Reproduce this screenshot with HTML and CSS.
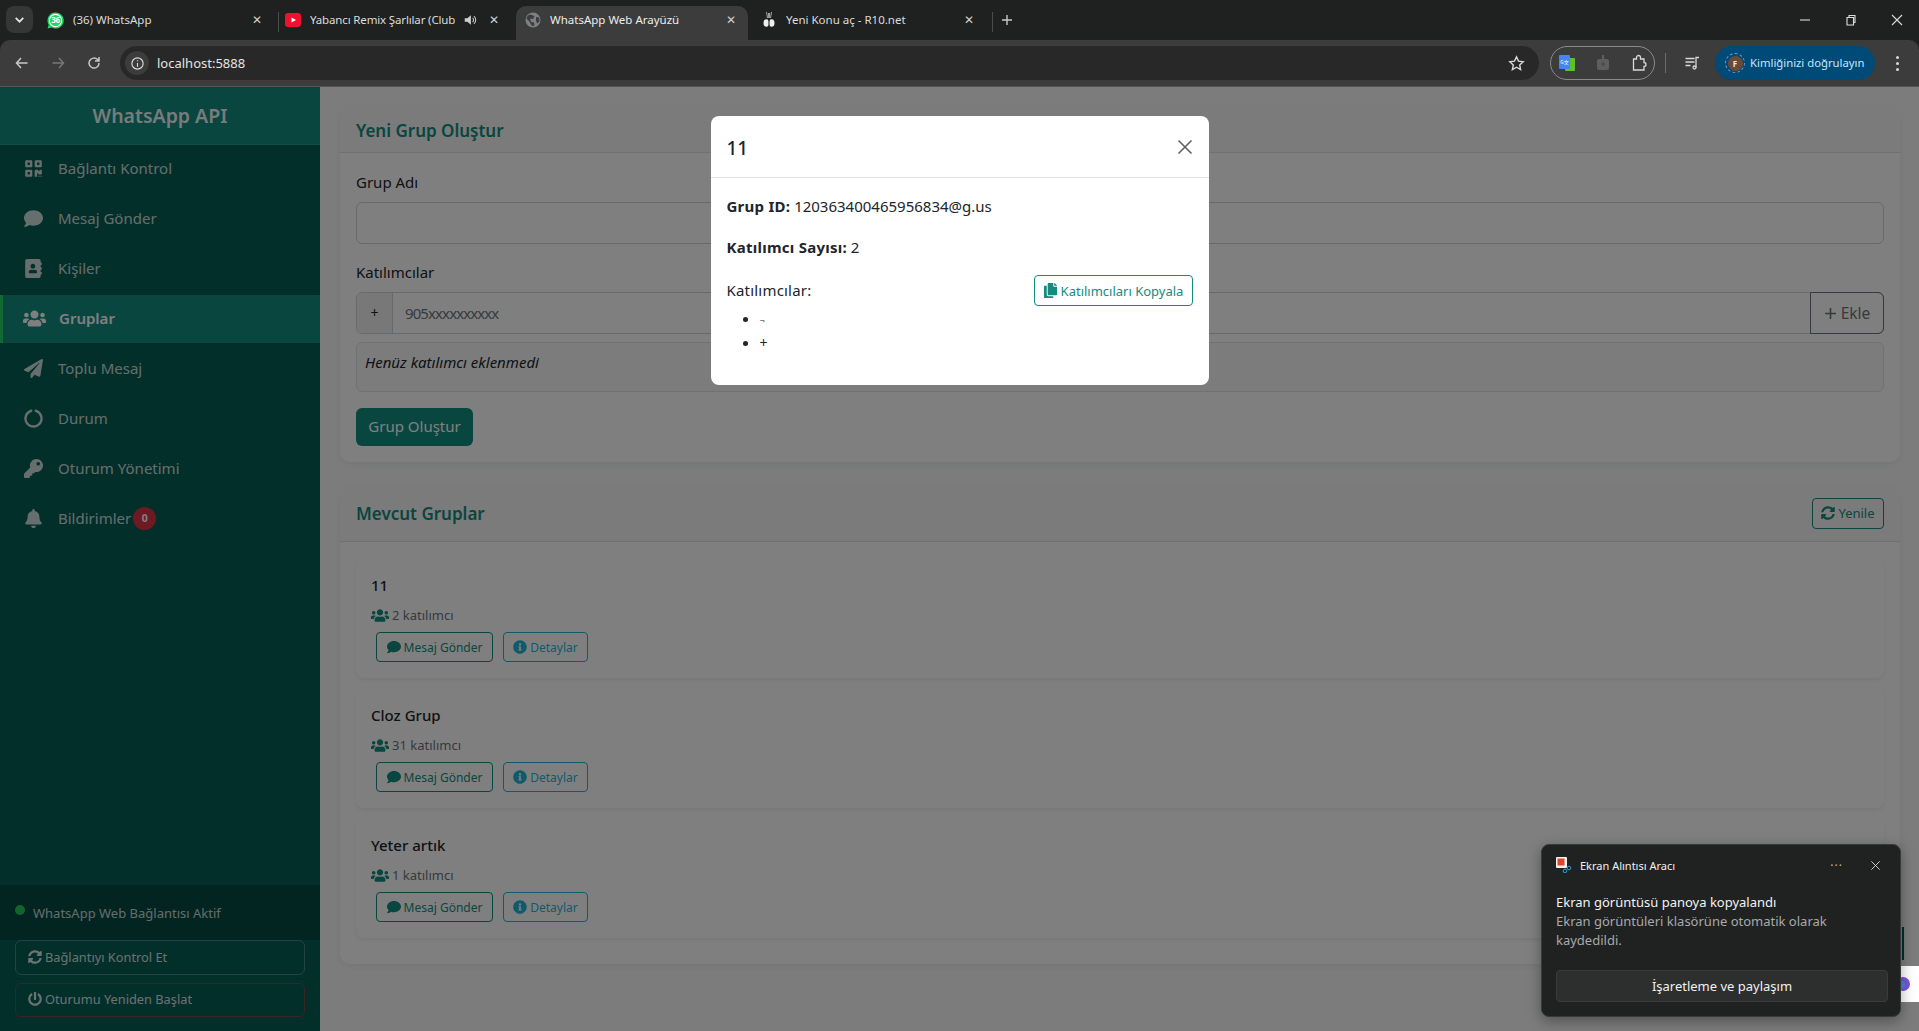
FILE: index.html
```html
<!DOCTYPE html>
<html lang="tr">
<head>
<meta charset="utf-8">
<title>WhatsApp Web Arayüzü</title>
<link rel="stylesheet" href="styles.css">
</head>
<body>
<svg class="defs" xmlns="http://www.w3.org/2000/svg">
  <symbol id="i-comment" viewBox="0 0 512 512"><path d="M256 32C114.6 32 0 125.1 0 240c0 49.6 21.4 95 57 130.7C44.5 421.1 2.7 466 2.2 466.5c-2.2 2.3-2.8 5.7-1.5 8.7S4.8 480 8 480c66.3 0 116-31.8 140.6-51.4 32.7 12.3 69 19.4 107.4 19.4 141.4 0 256-93.1 256-208S397.4 32 256 32z"/></symbol>
  <symbol id="i-users" viewBox="0 0 640 512"><path d="M96 224c35.3 0 64-28.7 64-64s-28.7-64-64-64-64 28.7-64 64 28.7 64 64 64zm448 0c35.3 0 64-28.7 64-64s-28.7-64-64-64-64 28.7-64 64 28.7 64 64 64zm32 32h-64c-17.6 0-33.5 7.1-45.1 18.6 40.3 22.1 68.9 62 75.1 109.4h66c17.7 0 32-14.3 32-32v-32c0-35.3-28.7-64-64-64zm-256 0c61.9 0 112-50.1 112-112S381.9 32 320 32 208 82.1 208 144s50.1 112 112 112zm76.8 32h-8.3c-20.8 10-43.9 16-68.5 16s-47.6-6-68.5-16h-8.3C179.6 288 128 339.6 128 403.2V432c0 26.5 21.5 48 48 48h288c26.5 0 48-21.5 48-48v-28.8c0-63.6-51.6-115.2-115.2-115.2zm-223.7-13.4C161.5 263.1 145.6 256 128 256H64c-35.3 0-64 28.7-64 64v32c0 17.7 14.3 32 32 32h65.9c6.3-47.4 34.9-87.3 75.2-109.4z"/></symbol>
  <symbol id="i-plane" viewBox="0 0 512 512"><path d="M476 3.2L12.5 270.6c-18.1 10.4-15.8 35.6 2.2 43.2L121 358.4l287.3-253.2c5.5-4.9 13.3 2.6 8.6 8.3L176 407v80.5c0 23.6 28.5 32.9 42.5 15.8L282 426l124.6 52.2c14.2 6 30.4-2.9 33-18.2l72-432C515 7.8 493.3-6.8 476 3.2z"/></symbol>
  <symbol id="i-bell" viewBox="0 0 448 512"><path d="M224 512c35.32 0 63.97-28.65 63.97-64H160.03c0 35.35 28.65 64 63.97 64zm215.39-149.71c-19.32-20.76-55.47-51.99-55.47-154.29 0-77.7-54.48-139.9-127.94-155.16V32c0-17.67-14.32-32-31.98-32s-31.98 14.33-31.98 32v20.84C118.56 68.1 64.08 130.3 64.08 208c0 102.3-36.15 133.53-55.47 154.29-6 6.45-8.66 14.16-8.61 21.71.11 16.4 12.98 32 32.1 32h383.8c19.12 0 32-15.6 32.1-32 .05-7.55-2.61-15.27-8.61-21.71z"/></symbol>
  <symbol id="i-key" viewBox="0 0 512 512"><path d="M512 176.001C512 273.203 433.202 352 336 352c-11.22 0-22.19-1.062-32.827-3.069l-24.012 27.014A23.999 23.999 0 0 1 261.223 384H224v40c0 13.255-10.745 24-24 24h-40v40c0 13.255-10.745 24-24 24H24c-13.255 0-24-10.745-24-24v-78.059c0-6.365 2.529-12.47 7.029-16.971l161.802-161.802C163.108 213.814 160 195.271 160 176 160 78.798 238.797.001 335.999 0 433.488-.001 512 78.511 512 176.001zM336 128c0 26.51 21.49 48 48 48s48-21.49 48-48-21.49-48-48-48-48 21.49-48 48z"/></symbol>
  <symbol id="i-sync" viewBox="0 0 512 512"><path d="M370.72 133.28C339.458 104.008 298.888 87.962 255.848 88c-77.458.068-144.328 53.178-162.791 126.85-1.344 5.363-6.122 9.15-11.651 9.15H24.103c-7.498 0-13.194-6.807-11.807-14.176C33.933 94.924 134.813 8 256 8c66.448 0 126.791 26.136 171.315 68.685L463.03 40.97C478.149 25.851 504 36.559 504 57.941V192c0 13.255-10.745 24-24 24H345.941c-21.382 0-32.09-25.851-16.971-40.971l41.75-41.749zM32 296h134.059c21.382 0 32.09 25.851 16.971 40.971l-41.75 41.75c31.262 29.273 71.835 45.319 114.876 45.28 77.418-.07 144.315-53.144 162.787-126.849 1.344-5.363 6.122-9.15 11.651-9.15h57.304c7.498 0 13.194 6.807 11.807 14.176C478.067 417.076 377.187 504 256 504c-66.448 0-126.791-26.136-171.315-68.685L48.97 471.03C33.851 486.149 8 475.441 8 454.059V320c0-13.255 10.745-24 24-24z"/></symbol>
  <symbol id="i-power" viewBox="0 0 512 512"><path d="M400 54.1c63 45 104 118.6 104 201.9 0 136.8-110.8 247.7-247.5 248C120 504.3 8.2 393 8 256.4 7.9 173.1 48.9 99.3 111.8 54.2c11.7-8.3 28-4.8 35 7.7L162.6 90c5.9 10.5 3.1 23.8-6.6 31-41.5 30.8-68 79.6-68 134.9-.1 92.3 74.5 168.1 168 168.1 91.6 0 168.6-74.2 168-169.1-.3-51.8-24.7-101.8-68.1-134-9.7-7.2-12.4-20.5-6.5-30.9l15.8-28.1c7-12.4 23.2-16.1 34.8-7.8zM296 264V24c0-13.3-10.7-24-24-24h-32c-13.3 0-24 10.7-24 24v240c0 13.3 10.7 24 24 24h32c13.3 0 24-10.7 24-24z"/></symbol>
  <symbol id="i-info" viewBox="0 0 512 512"><path d="M256 8C119.043 8 8 119.083 8 256c0 136.997 111.043 248 248 248s248-111.003 248-248C504 119.083 392.957 8 256 8zm0 110c23.196 0 42 18.804 42 42s-18.804 42-42 42-42-18.804-42-42 18.804-42 42-42zm56 254c0 6.627-5.373 12-12 12h-88c-6.627 0-12-5.373-12-12v-24c0-6.627 5.373-12 12-12h12v-64h-12c-6.627 0-12-5.373-12-12v-24c0-6.627 5.373-12 12-12h64c6.627 0 12 5.373 12 12v100h12c6.627 0 12 5.373 12 12v24z"/></symbol>
  <symbol id="i-copy" viewBox="0 0 448 512"><path d="M320 448v40c0 13.255-10.745 24-24 24H24c-13.255 0-24-10.745-24-24V120c0-13.255 10.745-24 24-24h72v296c0 30.879 25.121 56 56 56h168zm0-344V0H152c-13.255 0-24 10.745-24 24v368c0 13.255 10.745 24 24 24h272c13.255 0 24-10.745 24-24V128H344c-13.2 0-24-10.8-24-24zm120.971-31.029L375.029 7.029A24 24 0 0 0 358.059 0H352v96h96v-6.059a24 24 0 0 0-7.029-16.97z"/></symbol>
  <symbol id="i-book" viewBox="0 0 448 512"><path d="M436 160c6.6 0 12-5.4 12-12v-40c0-6.6-5.4-12-12-12h-20V48c0-26.5-21.5-48-48-48H48C21.5 0 0 21.5 0 48v416c0 26.5 21.5 48 48 48h320c26.5 0 48-21.5 48-48v-48h20c6.6 0 12-5.4 12-12v-40c0-6.6-5.4-12-12-12h-20v-64h20c6.6 0 12-5.4 12-12v-40c0-6.6-5.4-12-12-12h-20v-64h20zm-228-32c35.3 0 64 28.7 64 64s-28.7 64-64 64-64-28.7-64-64 28.7-64 64-64zm112 236.8c0 10.6-10 19.2-22.4 19.2H118.4C106 384 96 375.4 96 364.8v-19.2c0-31.8 30.1-57.6 67.2-57.6h5c12.3 5.1 25.7 8 39.8 8s27.6-2.9 39.8-8h5c37.1 0 67.2 25.8 67.2 57.6v19.2z"/></symbol>
  <symbol id="i-qr" viewBox="0 0 448 512"><path fill-rule="evenodd" d="M0 64c0-18 14-32 32-32h128c18 0 32 14 32 32v128c0 18-14 32-32 32H32c-18 0-32-14-32-32zm64 32v64h64V96zM256 64c0-18 14-32 32-32h128c18 0 32 14 32 32v128c0 18-14 32-32 32H288c-18 0-32-14-32-32zm64 32v64h64V96zM0 320c0-18 14-32 32-32h128c18 0 32 14 32 32v128c0 18-14 32-32 32H32c-18 0-32-14-32-32zm64 32v64h64v-64zM256 304c0-9 7-16 16-16h64c9 0 16 7 16 16v16h32v-16c0-9 7-16 16-16h32c9 0 16 7 16 16v96c0 9-7 16-16 16h-64c-9 0-16-7-16-16v-16h-32v80c0 9-7 16-16 16h-32c-9 0-16-7-16-16zM352 448h32v32h-32zm64 0h32v32h-32z"/></symbol>
  <symbol id="i-notch" viewBox="0 0 512 512"><path d="M288 39.1v16.7c0 10.8 7.3 20.2 17.7 23.1C383.2 100.4 440 171.5 440 256c0 101.7-82.3 184-184 184-101.700 0-184-82.300-184-184 0-84.500 56.800-155.600 134.300-177.200C216.700 75.900 224 66.500 224 55.700V39.100c0-15.700-14.800-27.200-30-23.200C86.600 43.500 7.400 141.200 8 257.300c.700 137.100 111.500 247 248.600 246.700C393.300 503.700 504 392.800 504 256c0-115.600-79-212.800-186-240.200-15.200-3.900-30 7.500-30 23.300z"/></symbol>
</svg>

<header class="browser">
  <div class="tabstrip">
    <button class="tab-search"><svg class="chevron" viewBox="0 0 12 12"><path d="M2.500 4.500 6 8l3.500-3.500"/></svg></button>
    <div class="tab">
      <svg class="favicon" viewBox="0 0 20 20"><path class="wa-green" d="M10 .500a9.500 9.500 0 0 0-8 14.400L.700 19.500l4.800-1.200A9.500 9.500 0 1 0 10 .500z"/><circle class="wa-inner" cx="10" cy="10" r="7.200"/><text class="wa-text" x="10" y="13.200">36</text></svg>
      <span class="tab-title">(36) WhatsApp</span>
      <span class="tab-close">✕</span>
    </div>
    <span class="tab-sep"></span>
    <div class="tab tab-yt">
      <svg class="favicon" viewBox="0 0 16 16"><rect class="yt-red" y="1" width="16" height="14" rx="3"/><path class="yt-play" d="M6.500 5.500 11 8l-4.500 2.500z"/></svg>
      <span class="tab-title tab-title-cut">Yabancı Remix Şarlılar (Club</span>
      <svg class="tab-audio" viewBox="0 0 16 16"><path class="fill-light" d="M2 6h3l4-3.500v11L5 10H2z"/><path class="stroke-light" d="M11 5.500a3.500 3.500 0 0 1 0 5M12.500 3.500a6 6 0 0 1 0 9"/></svg>
      <span class="tab-close">✕</span>
    </div>
    <div class="tab tab-active">
      <svg class="favicon" viewBox="0 0 16 16"><circle class="globe" cx="8" cy="8" r="7.500"/><path class="globe-land" d="M5 2.500 9.500 4 8 7 5 6.500 6 10l3 .5.500 3-2.500.5-3-5L1.500 6.500C2 4.500 3.500 3 5 2.500zM11 5l3 .5.500 4-2.500 2-1-3z"/></svg>
      <span class="tab-title">WhatsApp Web Arayüzü</span>
      <span class="tab-close">✕</span>
    </div>
    <div class="tab tab-last">
      <svg class="favicon" viewBox="0 0 16 16"><path class="ear" d="M5.500 0 6.500 6M10.500 0 9.500 6M7.500 1l.3 5M8.500 1l-.3 5"/><ellipse class="fill-white" cx="5.300" cy="11" rx="2.800" ry="3.800"/><ellipse class="fill-white" cx="10.700" cy="11" rx="2.800" ry="3.800"/><path class="ear-dark" d="M8 8v6"/></svg>
      <span class="tab-title">Yeni Konu aç - R10.net</span>
      <span class="tab-close">✕</span>
    </div>
    <span class="tab-sep"></span>
    <svg class="new-tab" viewBox="0 0 12 12"><path d="M6 1v10M1 6h10"/></svg>
    <div class="window-controls">
      <svg viewBox="0 0 12 12"><path d="M1 6h10"/></svg>
      <svg viewBox="0 0 12 12"><path d="M2 3.500h6.500V11H2zM4 3.500V1.500h6v7H8.500"/></svg>
      <svg viewBox="0 0 12 12"><path d="M1 1l10 10M11 1 1 11"/></svg>
    </div>
  </div>
  <div class="toolbar">
    <svg class="nav-icon" viewBox="0 0 16 16"><path d="M13.500 8h-11M7 3 2.500 8 7 13"/></svg>
    <svg class="nav-icon nav-dim" viewBox="0 0 16 16"><path d="M2.500 8h11M9 3l4.500 5L9 13"/></svg>
    <svg class="nav-icon" viewBox="0 0 16 16"><path d="M13 8a5 5 0 1 1-1.500-3.500L13 6M13 2v4H9"/></svg>
    <div class="omnibox">
      <span class="site-info"><svg viewBox="0 0 16 16"><circle cx="8" cy="8" r="6"/><path d="M8 7.500v4M8 4.500v1.200"/></svg></span>
      <span class="url">localhost:5888</span>
      <svg class="star" viewBox="0 0 16 16"><path d="m8 1.800 1.900 4 4.400.5-3.300 3 .9 4.400L8 11.500l-3.900 2.200.9-4.400-3.300-3 4.400-.5z"/></svg>
    </div>
    <div class="ext-pill">
      <svg class="ext" viewBox="0 0 18 18"><rect class="tr-green" x="7" y="4" width="10" height="13" rx="1"/><rect class="tr-blue" x="1" y="1" width="11" height="14" rx="1"/><text class="tr-text" x="6.500" y="9.500">G文</text></svg>
      <svg class="ext" viewBox="0 0 18 18"><rect class="ext-dim" x="3" y="5" width="12" height="11" rx="2"/><rect class="ext-dim" x="8" y="1" width="2" height="4"/><circle class="ext-dark" cx="9" cy="10" r="2"/></svg>
      <svg class="ext ext-puzzle" viewBox="0 0 18 18"><path d="M3.500 5h3V3.500a2 2 0 0 1 4 0V5h3.500v3.500a2 2 0 0 1 0 4V16H3.500z"/></svg>
    </div>
    <span class="toolbar-sep"></span>
    <svg class="queue" viewBox="0 0 16 16"><path d="M1.500 3.500h9M1.500 7h9M1.500 10.500h5M12 12.500V2.500h3"/><circle cx="10.500" cy="12.500" r="1.500"/></svg>
    <div class="profile">
      <span class="avatar-ring"><span class="avatar">F</span></span>
      <span class="profile-text">Kimliğinizi doğrulayın</span>
    </div>
    <span class="kebab"><i></i><i></i><i></i></span>
  </div>
</header>

<div class="app">
  <aside class="sidebar">
    <div class="brand">WhatsApp API</div>
    <nav class="menu">
      <a class="menu-item"><svg class="mi"><use href="#i-qr"/></svg>Bağlantı Kontrol</a>
      <a class="menu-item"><svg class="mi"><use href="#i-comment"/></svg>Mesaj Gönder</a>
      <a class="menu-item"><svg class="mi"><use href="#i-book"/></svg>Kişiler</a>
      <a class="menu-item menu-active"><svg class="mi mi-wide"><use href="#i-users"/></svg>Gruplar</a>
      <a class="menu-item"><svg class="mi"><use href="#i-plane"/></svg>Toplu Mesaj</a>
      <a class="menu-item"><svg class="mi"><use href="#i-notch"/></svg>Durum</a>
      <a class="menu-item"><svg class="mi"><use href="#i-key"/></svg>Oturum Yönetimi</a>
      <a class="menu-item"><svg class="mi"><use href="#i-bell"/></svg>Bildirimler<span class="badge">0</span></a>
    </nav>
    <div class="status"><span class="dot"></span><span>WhatsApp Web Bağlantısı Aktif</span></div>
    <div class="side-actions">
      <button class="side-btn"><svg class="bi"><use href="#i-sync"/></svg>Bağlantıyı Kontrol Et</button>
      <button class="side-btn side-btn-danger"><svg class="bi"><use href="#i-power"/></svg>Oturumu Yeniden Başlat</button>
    </div>
  </aside>

  <main class="main">
    <section class="card">
      <div class="card-head card-head-a"><h2>Yeni Grup Oluştur</h2></div>
      <div class="card-body card-body-a">
        <label class="label">Grup Adı</label>
        <div class="input input-block"></div>
        <label class="label">Katılımcılar</label>
        <div class="input-group">
          <span class="addon">+</span>
          <span class="input-ph">905xxxxxxxxxx</span>
          <button class="add-btn"><svg class="plus" viewBox="0 0 12 12"><path d="M6 1v10M1 6h10"/></svg>Ekle</button>
        </div>
        <div class="participants">Henüz katılımcı eklenmedi</div>
        <button class="primary-btn">Grup Oluştur</button>
      </div>
    </section>
    <section class="card">
      <div class="card-head card-head-b"><h2>Mevcut Gruplar</h2><button class="outline-btn btn-refresh"><svg class="bi"><use href="#i-sync"/></svg>Yenile</button></div>
      <div class="card-body card-body-b">
        <article class="group">
          <h3>11</h3>
          <p class="meta"><svg class="meta-icon"><use href="#i-users"/></svg>2 katılımcı</p>
          <div class="group-actions"><button class="outline-btn"><svg class="bi"><use href="#i-comment"/></svg>Mesaj Gönder</button><button class="outline-btn info-btn"><svg class="bi"><use href="#i-info"/></svg>Detaylar</button></div>
        </article>
        <article class="group">
          <h3>Cloz Grup</h3>
          <p class="meta"><svg class="meta-icon"><use href="#i-users"/></svg>31 katılımcı</p>
          <div class="group-actions"><button class="outline-btn"><svg class="bi"><use href="#i-comment"/></svg>Mesaj Gönder</button><button class="outline-btn info-btn"><svg class="bi"><use href="#i-info"/></svg>Detaylar</button></div>
        </article>
        <article class="group">
          <h3>Yeter artık</h3>
          <p class="meta"><svg class="meta-icon"><use href="#i-users"/></svg>1 katılımcı</p>
          <div class="group-actions"><button class="outline-btn"><svg class="bi"><use href="#i-comment"/></svg>Mesaj Gönder</button><button class="outline-btn info-btn"><svg class="bi"><use href="#i-info"/></svg>Detaylar</button></div>
        </article>
      </div>
    </section>
  </main>

  <span class="float-strip"></span>

  <div class="backdrop">
    <div class="modal">
      <div class="modal-head"><h4>11</h4><svg class="modal-close" viewBox="0 0 16 16"><path d="M1.500 1.500l13 13M14.500 1.500l-13 13"/></svg></div>
      <div class="modal-body">
        <p><strong>Grup ID:</strong> 120363400465956834@g.us</p>
        <p><strong>Katılımcı Sayısı:</strong> 2</p>
        <div class="modal-row">
          <span class="modal-sub">Katılımcılar:</span>
          <button class="copy-btn"><svg class="bi"><use href="#i-copy"/></svg>Katılımcıları Kopyala</button>
        </div>
        <ul class="modal-list">
          <li><span class="tiny">¬</span></li>
          <li><span class="list-plus">+</span></li>
        </ul>
      </div>
    </div>
  </div>

  <span class="float-chip"><svg viewBox="0 0 16 16"><circle class="chip-a" cx="8" cy="8" r="7"/><circle class="chip-b" cx="6" cy="9" r="4"/></svg></span>

  <aside class="toast">
    <div class="toast-head">
      <svg class="toast-app" viewBox="0 0 16 16"><rect class="snip-white" width="11" height="11" rx="1"/><rect class="snip-red" x="1.500" y="1.500" width="7" height="7"/><circle class="snip-blue" cx="13" cy="11" r="1.800"/><circle class="snip-blue" cx="9" cy="14" r="1.800"/></svg>
      <span class="toast-app-name">Ekran Alıntısı Aracı</span>
      <span class="toast-more">···</span>
      <svg class="toast-x" viewBox="0 0 12 12"><path d="M1.500 1.500l9 9M10.500 1.500l-9 9"/></svg>
    </div>
    <div class="toast-title">Ekran görüntüsü panoya kopyalandı</div>
    <div class="toast-text">Ekran görüntüleri klasörüne otomatik olarak kaydedildi.</div>
    <button class="toast-btn">İşaretleme ve paylaşım</button>
  </aside>
</div>
</body>
</html>
```
FILE: styles.css
```css
* { box-sizing: border-box; }
html, body { margin: 0; height: 100%; overflow: hidden; }
body { width: 1919px; height: 1031px; font-family: "Noto Sans", "Liberation Sans", sans-serif; font-size: 15px; line-height: 24px; color: #212529; background: #f8f9fa; }
.defs { position: absolute; width: 0; height: 0; }
button { font-family: inherit; cursor: pointer; }
svg { display: block; flex: none; }

/* browser chrome */
.browser { height: 87px; background: #1f2120; color: #e3e3e3; }
.tabstrip { height: 40px; display: flex; align-items: flex-start; padding-left: 6px; }
.tab-search { width: 27px; height: 27px; margin-top: 6px; margin-right: 7px; background: #353636; border: 0; border-radius: 8px; padding: 7px; }
.chevron { width: 13px; height: 13px; fill: none; stroke: #e3e3e3; stroke-width: 1.6; }
.tab { width: 238px; height: 34px; margin-top: 6px; padding: 0 14px 6px 7px; display: flex; align-items: center; font-size: 11.500px; }
.tab .favicon { width: 16px; height: 16px; margin: 0 9px 0 0; }
.tab:first-of-type .favicon { width: 17px; height: 17px; }
.tab-yt { margin-left: -1px; padding-left: 7px; padding-right: 15px; }
.tab-last { padding-right: 16px; }
.tab-sep { width: 1px; height: 20px; background: #4b4c4c; margin-top: 12px; flex: none; }
.tab-title { flex: 1; white-space: nowrap; overflow: hidden; color: #dcdcdc; }
.tab-title-cut { flex: none; letter-spacing: -.15px; }
.tab-audio { width: 14px; height: 14px; margin-left: 8px; }
.tab-close { font-size: 12px; color: #d0d0d0; width: 14px; text-align: center; flex: none; margin-left: auto; }
.tab-active { background: #3c3c3c; width: 232px; margin-right: 6px; border-radius: 10px 10px 0 0; padding-left: 9px; padding-right: 10px; }
.tab-active .tab-title { color: #ececec; }
.wa-green { fill: #25d366; }
.wa-inner { fill: #25d366; stroke: #fff; stroke-width: 1.200; }
.wa-text { fill: #fff; font-size: 9.500px; font-weight: 700; text-anchor: middle; letter-spacing: -.5px; font-family: "Noto Sans", sans-serif; }
.yt-red { fill: #f0112f; }
.yt-play { fill: #fff; }
.fill-light { fill: #cfcfcf; }
.stroke-light { fill: none; stroke: #cfcfcf; stroke-width: 1.200; }
.globe { fill: #7d8082; }
.globe-land { fill: #3c3c3c; }
.ear { fill: none; stroke: #c8c8c8; stroke-width: .8; }
.ear-dark { fill: none; stroke: #111; stroke-width: 1; }
.fill-white { fill: #eee; }
.new-tab { width: 12px; height: 12px; margin: 14px 0 0 8px; fill: none; stroke: #c7c7c7; stroke-width: 1.400; }
.window-controls { margin-left: auto; display: flex; gap: 34px; padding: 14px 16px 0 0; }
.window-controls svg { width: 12px; height: 12px; fill: none; stroke: #dcdcdc; stroke-width: 1.100; }

.toolbar { height: 47px; background: #3c3c3c; border-radius: 10px 10px 0 0; display: flex; align-items: center; padding-left: 14px; border-bottom: 1px solid #555; }
.nav-icon { width: 16px; height: 16px; margin-right: 20px; fill: none; stroke: #c7c7c7; stroke-width: 1.500; }
.nav-dim { stroke: #777; }
.omnibox { width: 1419px; height: 34px; margin-left: -2px; background: #282828; border-radius: 17px; display: flex; align-items: center; padding: 0 14px 0 5px; }
.site-info { width: 24px; height: 24px; border-radius: 50%; background: #3c3c3c; display: flex; align-items: center; justify-content: center; margin-right: 8px; }
.site-info svg { width: 15px; height: 15px; fill: none; stroke: #dcdcdc; stroke-width: 1.200; }
.url { font-size: 13px; color: #e3e3e3; flex: 1; }
.star { width: 17px; height: 17px; fill: none; stroke: #d8d8d8; stroke-width: 1.300; }
.ext-pill { width: 105px; height: 34px; margin-left: 11px; border: 1px solid #8a8a8a; border-radius: 17px; display: flex; align-items: center; justify-content: space-between; padding: 0 6px 0 7px; }
.ext { width: 18px; height: 18px; }
.tr-green { fill: #5bc22a; }
.tr-blue { fill: #4285f4; }
.tr-text { fill: #fff; font-size: 5px; text-anchor: middle; font-family: "Noto Sans CJK SC", sans-serif; }
.ext-dim { fill: #5e5e5e; }
.ext-dark { fill: #4d4d4d; }
.ext-puzzle { fill: none; stroke: #d8d8d8; stroke-width: 1.300; }
.toolbar-sep { width: 1px; height: 20px; background: #6a6a6a; margin-left: 10px; }
.queue { width: 16px; height: 16px; margin-left: 18px; fill: none; stroke: #d8d8d8; stroke-width: 1.300; }
.profile { width: 160px; height: 34px; margin-left: 15px; background: #004a77; border-radius: 17px; display: flex; align-items: center; padding-left: 10px; }
.avatar-ring { width: 20px; height: 20px; border-radius: 50%; border: 1px dashed #7aa6c4; display: flex; align-items: center; justify-content: center; flex: none; }
.avatar { width: 15px; height: 15px; border-radius: 50%; background: #6b4a3a; color: #f2e6de; font-size: 8px; font-weight: 700; line-height: 15px; text-align: center; }
.profile-text { margin-left: 5px; font-size: 11.300px; color: #c2e7ff; white-space: nowrap; }
.kebab { margin-left: 21px; display: flex; flex-direction: column; gap: 3px; }
.kebab i { width: 3px; height: 3px; border-radius: 50%; background: #d8d8d8; display: block; }

/* app */
.app { height: 944px; display: flex; position: relative; overflow: hidden; }
.sidebar { width: 320px; flex: none; background: #075e54; display: flex; flex-direction: column; color: rgba(255,255,255,.8); }
.brand { height: 58px; background: #128c7e; border-bottom: 1px solid rgba(255,255,255,.1); font-size: 19.500px; font-weight: 600; line-height: 57px; text-align: center; color: rgba(255,255,255,.95); }
.menu { flex: 1; display: flex; flex-direction: column; gap: 2px; }
.menu-item { height: 48px; display: flex; align-items: center; padding-left: 24px; padding-bottom: 2px; font-size: 15px; color: rgba(255,255,255,.8); }
.mi { width: 19px; height: 19px; margin-right: 15px; fill: rgba(255,255,255,.8); }
.mi-wide { width: 23px; margin-left: -1px; margin-right: 13px; }
.menu-active { background: #128c7e; border-left: 3px solid #25d366; padding-left: 21px; font-weight: 600; color: #fff; }
.menu-active .mi { fill: #fff; }
.badge { width: 23px; height: 23px; margin-left: 2px; border-radius: 50%; background: #dc3545; color: #fff; font-size: 10.500px; font-weight: 700; line-height: 23px; text-align: center; }
.status { height: 55px; background: rgba(0,0,0,.2); padding: 16px 15px 0; display: flex; font-size: 13px; line-height: 24px; }
.dot { width: 10px; height: 10px; border-radius: 50%; background: #28c55b; margin: 4px 8px 0 0; flex: none; }
.side-actions { height: 91px; padding: 0 15px; display: flex; flex-direction: column; gap: 8px; }
.side-btn { height: 35px; background: none; border: 1px solid rgba(255,255,255,.25); border-radius: 6px; color: rgba(255,255,255,.85); font-size: 12.800px; display: flex; align-items: center; padding: 0 12px 2px; }
.side-btn-danger { height: 34px; border-color: rgba(220,53,69,.5); }
.bi { width: 14px; height: 14px; margin-right: 3px; fill: currentColor; }

.main { flex: 1; min-width: 0; padding: 19px 19px 0 20px; display: flex; flex-direction: column; gap: 25px; }
.card { background: #fff; border-radius: 10px; box-shadow: 0 2px 8px rgba(0,0,0,.06); overflow: hidden; }
.card-head { background: #f7f7f7; border-bottom: 1px solid rgba(0,0,0,.08); display: flex; align-items: center; justify-content: space-between; padding: 0 16px; }
.card-head h2 { margin: 0; font-size: 17px; font-weight: 600; color: #128c7e; }
.card-head-a { height: 47px; padding-top: 4px; }
.card-head-b { height: 55px; }
.card-body-a { padding: 17px 16px 16px; }
.card-body-b { padding: 16px 16px 16px; }
.label { display: block; font-size: 15px; line-height: 24px; margin-bottom: 8px; }
.input { height: 42px; border: 1px solid #ced4da; border-radius: 6px; background: #fff; }
.input-block { margin-bottom: 16px; }
.input-group { height: 42px; display: flex; align-items: stretch; border: 1px solid #ced4da; border-radius: 6px; background: #fff; }
.addon { width: 36px; background: #f0f1f2; border-right: 1px solid #ced4da; border-radius: 6px 0 0 6px; text-align: center; line-height: 40px; font-size: 14px; }
.input-ph { flex: 1; padding-left: 12px; line-height: 40px; color: #6c757d; font-size: 15px; letter-spacing: -.9px; }
.add-btn { width: 74px; margin: -1px; border: 1px solid #6c757d; border-radius: 0 6px 6px 0; background: none; color: #6c757d; font-size: 15.500px; display: flex; align-items: center; justify-content: center; gap: 4px; padding: 0; }
.plus { width: 13px; height: 13px; fill: none; stroke: #6c757d; stroke-width: 1.500; }
.participants { height: 50px; margin-top: 8px; padding: 6px 8px 0; border: 1px solid #dee2e6; border-radius: 6px; background: #f8f9fa; font-style: italic; font-size: 15px; line-height: 27px; }
.primary-btn { display: block; margin-top: 16px; height: 38px; width: 117px; border: 0; border-radius: 6px; background: #128c7e; color: #fff; font-size: 15px; padding: 0 0 2px; }
.outline-btn { height: 30px; background: none; border: 1px solid #128c7e; border-radius: 4px; color: #128c7e; font-size: 13px; display: inline-flex; align-items: center; justify-content: center; padding: 0 9px; margin: 0 5px; }
.btn-refresh { width: 72px; height: 31px; margin: -2px 0 0; padding: 0; }
.info-btn { border-color: #1fb5d6; color: #1fb5d6; }
.group { background: #fff; border-radius: 8px; box-shadow: 0 2px 5px rgba(0,0,0,.07); padding: 15px 15px 15px; margin-bottom: 10px; height: 120px; }
.group h3 { margin: 0; font-size: 15px; font-weight: 500; line-height: 24px; }
.meta { margin: 6px 0 5px; display: flex; align-items: center; font-size: 13px; color: #6c757d; line-height: 24px; }
.meta-icon { width: 18px; height: 15px; margin-right: 3px; fill: #128c7e; }
.group-actions { display: flex; height: 30px; }
.group-actions .outline-btn { font-size: 12px; }
.group-actions .outline-btn:first-child { width: 117px; padding: 0; }
.group-actions .outline-btn:last-child { width: 85px; padding: 0; }

.float-strip { position: absolute; right: 15px; top: 840px; width: 2px; height: 33px; background: #075e54; }
.float-chip { position: absolute; right: 0; top: 879px; width: 19px; height: 36px; background: #fff; display: flex; align-items: center; }
.float-chip svg { width: 16px; height: 16px; margin-left: -5px; }
.chip-a { fill: #7a55d6; }
.chip-b { fill: #4a82e8; }

/* modal */
.backdrop { position: absolute; inset: 0; background: rgba(0,0,0,.5); display: flex; justify-content: center; align-items: flex-start; padding-top: 29px; }
.modal { width: 498px; height: 269px; background: #fff; border-radius: 8px; overflow: hidden; }
.modal-head { height: 62px; border-bottom: 1px solid #dee2e6; display: flex; align-items: center; justify-content: space-between; padding: 2px 16px 0; }
.modal-head h4 { margin: 0; font-size: 19px; font-weight: 500; line-height: 28px; }
.modal-close { width: 16px; height: 16px; fill: none; stroke: #5c5c5c; stroke-width: 1.500; margin-top: -2px; }
.modal-body { padding: 16px 16px 0; }
.modal-body p { margin: 0 0 16px; line-height: 24px; }
.modal-body p:first-child { margin-bottom: 17px; }
.modal-body strong { font-weight: 700; letter-spacing: .25px; }
.modal-row { display: flex; align-items: center; justify-content: space-between; height: 31px; }
.modal-sub { margin-top: -2px; letter-spacing: .2px; }
.copy-btn { width: 159px; height: 31px; background: none; border: 1px solid #128c7e; border-radius: 4px; color: #128c7e; font-size: 13px; display: flex; align-items: center; justify-content: center; padding: 0; }
.copy-btn .bi { width: 15px; height: 15px; }
.modal-list { margin: 0; padding-left: 33px; font-size: 15px; }
.modal-list li { height: 24px; line-height: 24px; }
.tiny { font-size: 9px; }
.list-plus { font-size: 14px; }

/* toast */
.toast { position: absolute; right: 18px; bottom: 14px; width: 360px; height: 173px; background: #202222; border: 1px solid #3a3a3a; border-radius: 8px; box-shadow: 0 4px 14px rgba(0,0,0,.35); padding: 0 14px; color: #f0f0f0; }
.toast-head { height: 41px; display: flex; align-items: center; }
.toast-app { width: 16px; height: 16px; margin-right: 8px; margin-top: -1px; }
.snip-white { fill: #f2f2f2; }
.snip-red { fill: #d9482e; }
.snip-blue { fill: none; stroke: #2f9bd8; stroke-width: 1; }
.toast-app-name { font-size: 11px; flex: 1; }
.toast-more { font-size: 12px; color: #b8b8b8; margin-right: 27px; letter-spacing: 1px; }
.toast-x { width: 11px; height: 11px; fill: none; stroke: #d8d8d8; stroke-width: 1; margin-right: 5px; }
.toast-title { margin-top: 6px; font-size: 13px; line-height: 20px; color: #f2f2f2; }
.toast-text { font-size: 13px; line-height: 19px; color: #a9a9a9; width: 320px; }
.toast-btn { display: block; width: 332px; height: 32px; margin-top: 20px; background: #2d2f2f; border: 1px solid #3a3c3c; border-radius: 4px; color: #f0f0f0; font-size: 13px; padding: 0; }
```
